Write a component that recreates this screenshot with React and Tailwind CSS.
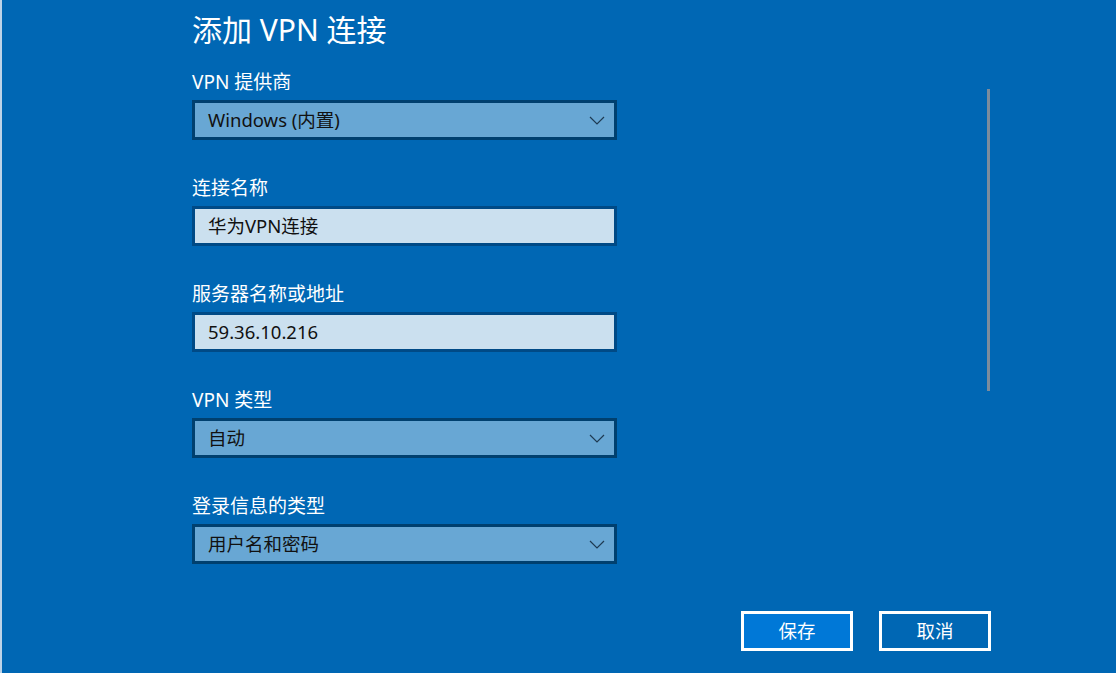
const font = { fontFamily: '"Noto Sans", "Noto Sans CJK SC", sans-serif' };

const Chevron = () => (
    <svg width="16" height="9" viewBox="0 0 16 9" className="shrink-0">
        <path d="M1 1 L8 8 L15 1" fill="none" stroke="#1f3a52" strokeWidth="1.2" />
    </svg>
);

const Field = ({ label, children }) => (
    <div className="flex flex-col mb-[35px]">
        <div className="h-[26px] leading-[26px] text-[19px] text-white">{label}</div>
        <div className="mt-[5px]">{children}</div>
    </div>
);

const Select = ({ value }) => (
    <div className="w-[425px] h-[40px] border-[3px] border-[#00406f] bg-[#68a7d4] flex items-center justify-between pl-[13px] pr-[9px]">
        <span className="text-[18.5px] text-[#111]">{value}</span>
        <Chevron />
    </div>
);

const Input = ({ value }) => (
    <div className="w-[425px] h-[40px] border-[3px] border-[#004a86] bg-[#cbe0ef] flex items-center pl-[13px]">
        <span className="text-[18.5px] text-[#111]">{value}</span>
    </div>
);

const App = () => {
    return (
        <div className="relative w-[1116px] h-[673px] bg-[#0067b4] flex overflow-hidden" style={font}>
            <div className="w-[2px] h-full bg-[#bcd3e8]" />
            <div className="flex flex-col pl-[190px] pt-[9px] w-[992px]">
                <h1 className="h-[42px] leading-[42px] text-[30px] text-white mb-[18px]">添加 VPN 连接</h1>
                <Field label="VPN 提供商">
                    <Select value="Windows (内置)" />
                </Field>
                <Field label="连接名称">
                    <Input value="华为VPN连接" />
                </Field>
                <Field label="服务器名称或地址">
                    <Input value="59.36.10.216" />
                </Field>
                <Field label="VPN 类型">
                    <Select value="自动" />
                </Field>
                <Field label="登录信息的类型">
                    <Select value="用户名和密码" />
                </Field>
                <div className="flex justify-end gap-[26px] mt-[12px] pr-[3px]">
                    <button className="w-[112px] h-[40px] border-[3px] border-white bg-[#0078d7] text-white text-[18.5px]">保存</button>
                    <button className="w-[112px] h-[40px] border-[3px] border-white text-white text-[18.5px]">取消</button>
                </div>
            </div>
            <div className="absolute left-[987px] top-[89px] w-[3px] h-[302px] bg-[#7c8c9c]" />
        </div>
    );
};

export default App;
